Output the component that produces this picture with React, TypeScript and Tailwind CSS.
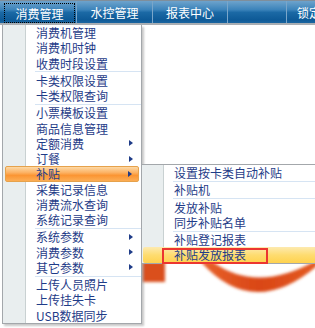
type Item = { label?: string; sub?: boolean; active?: boolean; sep?: boolean };

const mainItems: Item[] = [
  { label: '消费机管理' },
  { label: '消费机时钟' },
  { label: '收费时段设置' },
  { sep: true },
  { label: '卡类权限设置' },
  { label: '卡类权限查询' },
  { sep: true },
  { label: '小票模板设置' },
  { label: '商品信息管理' },
  { label: '定额消费', sub: true },
  { label: '订餐', sub: true },
  { label: '补贴', sub: true, active: true },
  { label: '采集记录信息' },
  { label: '消费流水查询' },
  { label: '系统记录查询' },
  { sep: true },
  { label: '系统参数', sub: true },
  { label: '消费参数', sub: true },
  { label: '其它参数', sub: true },
  { sep: true },
  { label: '上传人员照片' },
  { label: '上传挂失卡' },
  { label: 'USB数据同步' },
];

const subItems: Item[] = [
  { label: '设置按卡类自动补贴' },
  { sep: true },
  { label: '补贴机' },
  { sep: true },
  { label: '发放补贴' },
  { label: '同步补贴名单' },
  { sep: true },
  { label: '补贴登记报表' },
  { label: '补贴发放报表', active: true },
];

function Arrow() {
  return (
    <svg width="4" height="6" viewBox="0 0 4 6" className="shrink-0">
      <path d="M0 0L4 3L0 6Z" fill="#1f3c88" />
    </svg>
  );
}

function MainRow({ item }: { item: Item }) {
  if (item.sep) {
    return (
      <div className="h-[2px] flex items-center">
        <div className="h-px flex-1 ml-[32px] bg-[#d6e4f3]" />
      </div>
    );
  }
  if (item.active) {
    return (
      <div className="h-[15.25px] mx-[2px] flex items-center justify-between pl-[30px] pr-[6px] rounded-[2px] border border-[#e6a24c] bg-[linear-gradient(to_bottom,#fdd9a6,#fcb264_40%,#fb9533_60%,#fcae55)]">
        <span>{item.label}</span>
        <Arrow />
      </div>
    );
  }
  return (
    <div className="h-[15.25px] flex items-center justify-between pl-[33px] pr-[8px]">
      <span>{item.label}</span>
      {item.sub && <Arrow />}
    </div>
  );
}

function SubRow({ item }: { item: Item }) {
  if (item.sep) {
    return (
      <div className="h-[2px] flex items-center">
        <div className="h-px flex-1 ml-[31px] bg-[#d6e4f3]" />
      </div>
    );
  }
  if (item.active) {
    return (
      <div className="h-[15.25px] ml-[1px] flex items-center pl-[31px] rounded-l-[2px] bg-[linear-gradient(to_bottom,#fdeab0,#fedc70_50%,#ffd24e)]">
        <span>{item.label}</span>
      </div>
    );
  }
  return (
    <div className="h-[15.25px] flex items-center pl-[32px]">
      <span>{item.label}</span>
    </div>
  );
}

export default function App() {
  return (
    <div className="relative w-[315px] h-[328px] overflow-hidden bg-white font-['Noto_Sans_CJK_SC',sans-serif] text-[12px] leading-[13px]">
      {/* top nav bar */}
      <div className="flex h-[25px] border-t border-t-[#7f8e9b] border-b-2 border-b-[#a9aeb3] bg-[linear-gradient(to_bottom,#6ea3cc,#3b83ba_40%,#1b69a5_52%,#0e5a97_85%,#1a65a0)] text-white">
        <div className="w-[76px] shrink-0 flex pl-[4px] pr-[1px] pt-[2px]">
          <div className="flex-1 flex items-center justify-center border border-dotted border-black">消费管理</div>
        </div>
        <div className="w-px shrink-0 bg-[#79a6ca]" />
        <div className="w-[75px] shrink-0 flex items-center justify-center">水控管理</div>
        <div className="w-px shrink-0 bg-[#79a6ca]" />
        <div className="w-[74px] shrink-0 flex items-center justify-center">报表中心</div>
        <div className="w-px shrink-0 bg-[#79a6ca]" />
        <div className="w-[58px] shrink-0" />
        <div className="w-px shrink-0 bg-[#79a6ca]" />
        <div className="flex-1 min-w-0 overflow-hidden flex items-center pl-[10px] whitespace-nowrap">锁定</div>
      </div>

      {/* blurred logo behind the menus */}
      <svg className="absolute left-[141px] top-[262px]" width="174" height="34" viewBox="0 0 174 34">
        <defs>
          <filter id="soft" x="-20%" y="-50%" width="140%" height="200%">
            <feGaussianBlur stdDeviation="1.6" />
          </filter>
          <linearGradient id="sw" x1="0" x2="1" y1="0" y2="0">
            <stop offset="0" stopColor="#e8622a" />
            <stop offset="0.5" stopColor="#d94616" />
            <stop offset="1" stopColor="#e45a22" />
          </linearGradient>
        </defs>
        <g filter="url(#soft)">
          <rect x="2" y="0" width="22" height="20" fill="#da4f1d" />
          <path d="M60 0 Q112 58 176 4 L176 -2 Q116 32 72 0 Z" fill="url(#sw)" />
        </g>
      </svg>

      {/* main dropdown */}
      <div className="absolute left-[2px] top-[25px] w-[140px] border-l border-r border-b border-[#a3a7ab] shadow-[2px_2px_2px_rgba(0,0,0,0.22)] bg-[linear-gradient(to_right,#e9eeef_22px,#c9d1d2_22px,#c9d1d2_23px,#ffffff_23px)] text-[#1f3c88]">
        {mainItems.map((it, i) => (
          <MainRow key={i} item={it} />
        ))}
      </div>

      {/* sub dropdown */}
      <div className="absolute left-[141px] top-[164px] w-[200px] border-t border-l border-b border-[#a3a7ab] bg-[linear-gradient(to_right,#e9eeef_21px,#c9d1d2_21px,#c9d1d2_22px,#ffffff_22px)] text-[#1f3c88]">
        {subItems.map((it, i) => (
          <SubRow key={i} item={it} />
        ))}
        <div className="absolute left-[20px] top-[83px] w-[106px] h-[16px] border-2 border-[#ec3630]" />
      </div>
    </div>
  );
}
